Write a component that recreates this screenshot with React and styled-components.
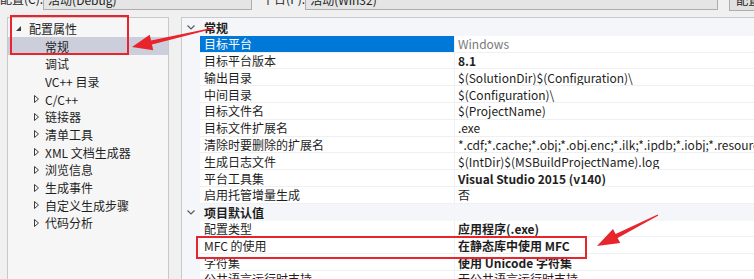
import React from 'react';
import styled, { createGlobalStyle } from 'styled-components';

const GlobalStyle = createGlobalStyle`
  html, body {
    margin: 0;
    padding: 0;
    background: #f0f0f0;
  }
  body {
    font-family: "Noto Sans CJK SC", "Noto Sans", sans-serif;
    font-size: 12px;
    color: #1e1e1e;
  }
`;

const Page = styled.div`
  position: relative;
  width: 754px;
  height: 279px;
  overflow: hidden;
  display: flex;
  flex-direction: column;
  background: #f0f0f0;
`;

const TopBar = styled.div`
  display: flex;
  align-items: center;
  height: 22px;
  margin-top: -12px;
  flex-shrink: 0;
`;

const BarLabel = styled.span`
  width: ${(p) => p.$w}px;
  margin-left: ${(p) => p.$ml || 0}px;
  white-space: nowrap;
  transform: translateY(-1px);
`;

const Combo = styled.div`
  position: relative;
  box-sizing: border-box;
  width: ${(p) => p.$w}px;
  height: 22px;
  padding-left: 4px;
  display: flex;
  align-items: center;
  border: 1px solid #adadad;
  background: #e5e5e5;
  white-space: nowrap;
  flex-shrink: 0;
`;

const BarButton = styled.div`
  box-sizing: border-box;
  margin-left: 11px;
  width: 80px;
  height: 23px;
  padding-left: 6px;
  display: flex;
  align-items: center;
  border: 1px solid #adadad;
  background: #e1e1e1;
  white-space: nowrap;
  flex-shrink: 0;
`;

const Main = styled.div`
  flex: 1;
  display: flex;
  margin-top: 7px;
  min-height: 0;
`;

const Tree = styled.div`
  box-sizing: border-box;
  width: 162px;
  margin-left: 7px;
  padding-top: 1.5px;
  border: 1px solid #c9c9c9;
  border-bottom: none;
  background: #f6f6f6;
  flex-shrink: 0;
`;

const TreeRow = styled.div`
  height: 17.7px;
  display: flex;
  align-items: center;
  padding-left: ${(p) => (p.$level ? 26 : 8)}px;
  background: ${(p) => (p.$selected ? '#cccedb' : 'transparent')};
  white-space: nowrap;
`;

const Toggle = styled.span`
  width: ${(p) => (p.$level ? 11 : 13)}px;
  display: flex;
  align-items: center;
  flex-shrink: 0;
`;

const Grid = styled.div`
  flex: 1;
  margin-left: 12px;
  padding-top: 1px;
  border-left: 1px solid #c9c9c9;
  border-top: 1px solid #c9c9c9;
  background: #f5f6f9;
  overflow: hidden;
`;

const GroupRow = styled.div`
  height: 16.8px;
  display: grid;
  grid-template-columns: 18px 1fr;
  align-items: center;
  font-weight: bold;
  white-space: nowrap;
`;

const Chevron = styled.span`
  display: flex;
  align-items: center;
  padding-left: 5px;
`;

const GroupTitle = styled.span`
  padding-left: 4px;
`;

const PropRow = styled.div`
  height: 16.8px;
  display: grid;
  grid-template-columns: 18px 255px 1fr;
  white-space: nowrap;
`;

const Cell = styled.div`
  box-sizing: border-box;
  display: flex;
  align-items: center;
  overflow: hidden;
  background: #ffffff;
  border-bottom: 1px solid #eff0f2;
`;

const NameCell = styled(Cell)`
  padding-left: 4px;
  border-right: 1px solid #eff0f2;
  background: ${(p) => (p.$selected ? '#0078d7' : '#ffffff')};
  color: ${(p) => (p.$selected ? '#ffffff' : '#1e1e1e')};
`;

const ValueCell = styled(Cell)`
  padding-left: 3px;
  font-weight: ${(p) => (p.$bold ? 'bold' : 'normal')};
  color: ${(p) => (p.$muted ? '#7a7a7a' : '#1e1e1e')};
`;

const Overlay = styled.svg`
  position: absolute;
  left: 0;
  top: 0;
  pointer-events: none;
`;

const treeItems = [
  { label: '配置属性', level: 0, open: true },
  { label: '常规', level: 1, selected: true },
  { label: '调试', level: 1 },
  { label: 'VC++ 目录', level: 1 },
  { label: 'C/C++', level: 1, kids: true },
  { label: '链接器', level: 1, kids: true },
  { label: '清单工具', level: 1, kids: true },
  { label: 'XML 文档生成器', level: 1, kids: true },
  { label: '浏览信息', level: 1, kids: true },
  { label: '生成事件', level: 1, kids: true },
  { label: '自定义生成步骤', level: 1, kids: true },
  { label: '代码分析', level: 1, kids: true },
];

const groups = [
  {
    title: '常规',
    rows: [
      { name: '目标平台', value: 'Windows', selected: true, muted: true },
      { name: '目标平台版本', value: '8.1', bold: true },
      { name: '输出目录', value: '$(SolutionDir)$(Configuration)\\' },
      { name: '中间目录', value: '$(Configuration)\\' },
      { name: '目标文件名', value: '$(ProjectName)' },
      { name: '目标文件扩展名', value: '.exe' },
      {
        name: '清除时要删除的扩展名',
        value: '*.cdf;*.cache;*.obj;*.obj.enc;*.ilk;*.ipdb;*.iobj;*.resources;*.tlb;*.tli;*.tlh;*.tmp',
      },
      { name: '生成日志文件', value: '$(IntDir)$(MSBuildProjectName).log' },
      { name: '平台工具集', value: 'Visual Studio 2015 (v140)', bold: true },
      { name: '启用托管增量生成', value: '否' },
    ],
  },
  {
    title: '项目默认值',
    rows: [
      { name: '配置类型', value: '应用程序(.exe)', bold: true },
      { name: 'MFC 的使用', value: '在静态库中使用 MFC', bold: true },
      { name: '字符集', value: '使用 Unicode 字符集', bold: true },
      { name: '公共语言运行时支持', value: '无公共语言运行时支持' },
    ],
  },
];

function OpenArrow() {
  return (
    <svg width="5" height="5" viewBox="0 0 5 5">
      <polygon points="5,0 5,5 0,5" fill="#3c3c3c" />
    </svg>
  );
}

function ClosedArrow() {
  return (
    <svg width="5" height="8" viewBox="0 0 5 8">
      <polygon points="0.5,0.5 4.5,4 0.5,7.5" fill="none" stroke="#3c3c3c" strokeWidth="1" />
    </svg>
  );
}

function ChevronDown() {
  return (
    <svg width="8" height="5" viewBox="0 0 8 5">
      <polyline points="0.5,0.5 4,4 7.5,0.5" fill="none" stroke="#5a5a5a" strokeWidth="1.2" />
    </svg>
  );
}

function Annotations() {
  const red = '#e8242c';
  return (
    <Overlay width="754" height="279" viewBox="0 0 754 279">
      <rect x="11" y="16" width="117" height="38" fill="none" stroke={red} strokeWidth="2" />
      <rect x="197" y="237" width="389" height="21" fill="none" stroke={red} strokeWidth="2" />
      <polygon
        points="214.1,28.5 151.9,44.4 153.3,50.3 132,47 149.7,34.7 151.1,40.6 213.9,27.5"
        fill={red}
      />
      <polygon
        points="658.3,215.5 617.6,238 620.2,243.1 597,246 613,228.9 615.6,234.1 657.7,214.5"
        fill={red}
      />
    </Overlay>
  );
}

export default function App() {
  return (
    <Page>
      <GlobalStyle />
      <TopBar>
        <BarLabel $w={54}>配置(C):</BarLabel>
        <Combo $w={209}>活动(Debug)</Combo>
        <BarLabel $w={46} $ml={10}>平台(P):</BarLabel>
        <Combo $w={413}>活动(Win32)</Combo>
        <BarButton>配置管理器(O)...</BarButton>
      </TopBar>
      <Main>
        <Tree>
          {treeItems.map((item) => (
            <TreeRow key={item.label} $level={item.level} $selected={item.selected}>
              <Toggle $level={item.level}>
                {item.open && <OpenArrow />}
                {item.kids && <ClosedArrow />}
              </Toggle>
              {item.label}
            </TreeRow>
          ))}
        </Tree>
        <Grid>
          {groups.map((group) => (
            <React.Fragment key={group.title}>
              <GroupRow>
                <Chevron>
                  <ChevronDown />
                </Chevron>
                <GroupTitle>{group.title}</GroupTitle>
              </GroupRow>
              {group.rows.map((row) => (
                <PropRow key={row.name}>
                  <span />
                  <NameCell $selected={row.selected}>{row.name}</NameCell>
                  <ValueCell $bold={row.bold} $muted={row.muted}>
                    {row.value}
                  </ValueCell>
                </PropRow>
              ))}
            </React.Fragment>
          ))}
        </Grid>
      </Main>
      <Annotations />
    </Page>
  );
}
